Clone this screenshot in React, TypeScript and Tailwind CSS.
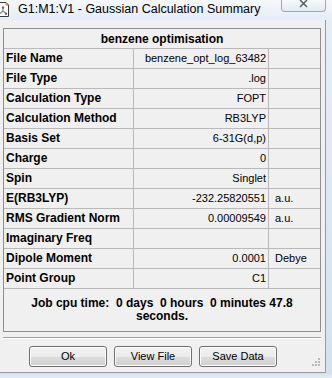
import type { ReactNode } from "react"

const rows: [string, string, string][] = [
  ["File Name", "benzene_opt_log_63482", ""],
  ["File Type", ".log", ""],
  ["Calculation Type", "FOPT", ""],
  ["Calculation Method", "RB3LYP", ""],
  ["Basis Set", "6-31G(d,p)", ""],
  ["Charge", "0", ""],
  ["Spin", "Singlet", ""],
  ["E(RB3LYP)", "-232.25820551", "a.u."],
  ["RMS Gradient Norm", "0.00009549", "a.u."],
  ["Imaginary Freq", "", ""],
  ["Dipole Moment", "0.0001", "Debye"],
  ["Point Group", "C1", ""],
]

function AppIcon() {
  return (
    <svg width="10" height="16" viewBox="0 0 10 16" className="shrink-0">
      <path d="M-2 1.5 H6 L8.5 4 V15.5 H-2 Z" fill="#fff" stroke="#3a3a3a" />
      <path d="M6 1.5 V4 H8.5" fill="none" stroke="#c8781e" />
      <line x1="3" y1="7" x2="3" y2="10" stroke="#8a8a8a" strokeWidth="1.3" />
      <line x1="3" y1="10" x2="0" y2="12.5" stroke="#8a8a8a" strokeWidth="1.3" />
      <line x1="3" y1="10" x2="6" y2="12.5" stroke="#8a8a8a" strokeWidth="1.3" />
      <circle cx="3" cy="6.5" r="1.2" fill="#6a6a6a" />
      <circle cx="6" cy="12.8" r="1.2" fill="#6a6a6a" />
    </svg>
  )
}

function WinButton({ children }: { children: ReactNode }) {
  return (
    <button className="h-[21px] w-[78px] rounded-[3px] border border-[#707070] bg-[linear-gradient(#f2f2f2_0%,#ebebeb_50%,#dddddd_51%,#cfcfcf_100%)] text-[11px] leading-none text-black shadow-[inset_0_0_0_1px_#fcfcfc]">
      {children}
    </button>
  )
}

function ResizeGrip() {
  return (
    <svg width="10" height="10" viewBox="0 0 10 10">
      {[
        [7, 1],
        [4, 4],
        [7, 4],
        [1, 7],
        [4, 7],
        [7, 7],
      ].map(([x, y]) => (
        <rect key={`${x}-${y}`} x={x} y={y} width="2" height="2" fill="#b8b8b8" />
      ))}
    </svg>
  )
}

export default function App() {
  return (
    <div
      className="flex h-[378px] w-[332px] flex-col overflow-hidden bg-[#cfe0ee] text-black"
      style={{ fontFamily: '"Liberation Sans", Arial, sans-serif' }}
    >
      {/* title bar */}
      <div className="flex h-[20px] shrink-0 items-start bg-[linear-gradient(#f4f8fb,#e4eef6)]">
        <div className="pt-[1px]">
          <AppIcon />
        </div>
        <span className="ml-[8px] pt-[1px] text-[12.5px] leading-[16px] text-black">
          G1:M1:V1 - Gaussian Calculation Summary
        </span>
        <div className="ml-auto mr-[6px] flex h-[12px] w-[45px] items-center justify-center rounded-b-[4px] border border-t-0 border-[#9aa7b6] bg-[linear-gradient(#f6f9fc,#e3ebf3)]">
          <svg width="9" height="8" viewBox="0 0 9 8" className="-mt-[4px]">
            <path d="M1 0 L8 7 M8 0 L1 7" stroke="#5b6470" strokeWidth="1.6" />
          </svg>
        </div>
      </div>

      {/* window body */}
      <div className="flex h-[353px] shrink-0">
        <div className="flex w-[326px] flex-col border-r border-b border-[#9a9a9a] bg-[#f0f0f0] pl-[3px] pt-[8px]">
          <div className="w-[318px] border border-[#8e8f8f] bg-[#f0f0f0]">
            <div className="flex h-[20px] items-center justify-center border-b border-[#b9b9b9] text-[12px] font-bold">
              benzene optimisation
            </div>
            {rows.map(([label, value, unit]) => (
              <div key={label} className="flex h-[20px] border-b border-[#b9b9b9] text-[11px] leading-[19px]">
                <div className="w-[130px] shrink-0 border-r border-[#b9b9b9] pl-[2px] text-[12px] font-bold">{label}</div>
                <div className="w-[135px] shrink-0 border-r border-[#b9b9b9] pr-[2px] text-right">{value}</div>
                <div className="flex-1 pl-[6px]">{unit}</div>
              </div>
            ))}
            <div className="h-[42px] pt-[8px] text-center text-[12px] font-bold leading-[13px] whitespace-pre">
              {"Job cpu time:  0 days  0 hours  0 minutes 47.8"}
              <br />
              seconds.
            </div>
          </div>

          <div className="mt-[5px] h-[2px] w-[318px] border-t border-b border-t-[#a0a0a0] border-b-[#ffffff]" />

          <div className="mt-[7px] flex items-start">
            <div className="ml-[26px] flex gap-[7px]">
              <WinButton>Ok</WinButton>
              <WinButton>View File</WinButton>
              <WinButton>Save Data</WinButton>
            </div>
            <div className="ml-auto mr-[4px] mt-[11px]">
              <ResizeGrip />
            </div>
          </div>
        </div>
        <div className="flex-1 bg-[linear-gradient(#e6eef5,#d2e2ee)]" />
      </div>

      <div className="flex-1 bg-[linear-gradient(#cfe1ee,#e4eef5)]" />
    </div>
  )
}
